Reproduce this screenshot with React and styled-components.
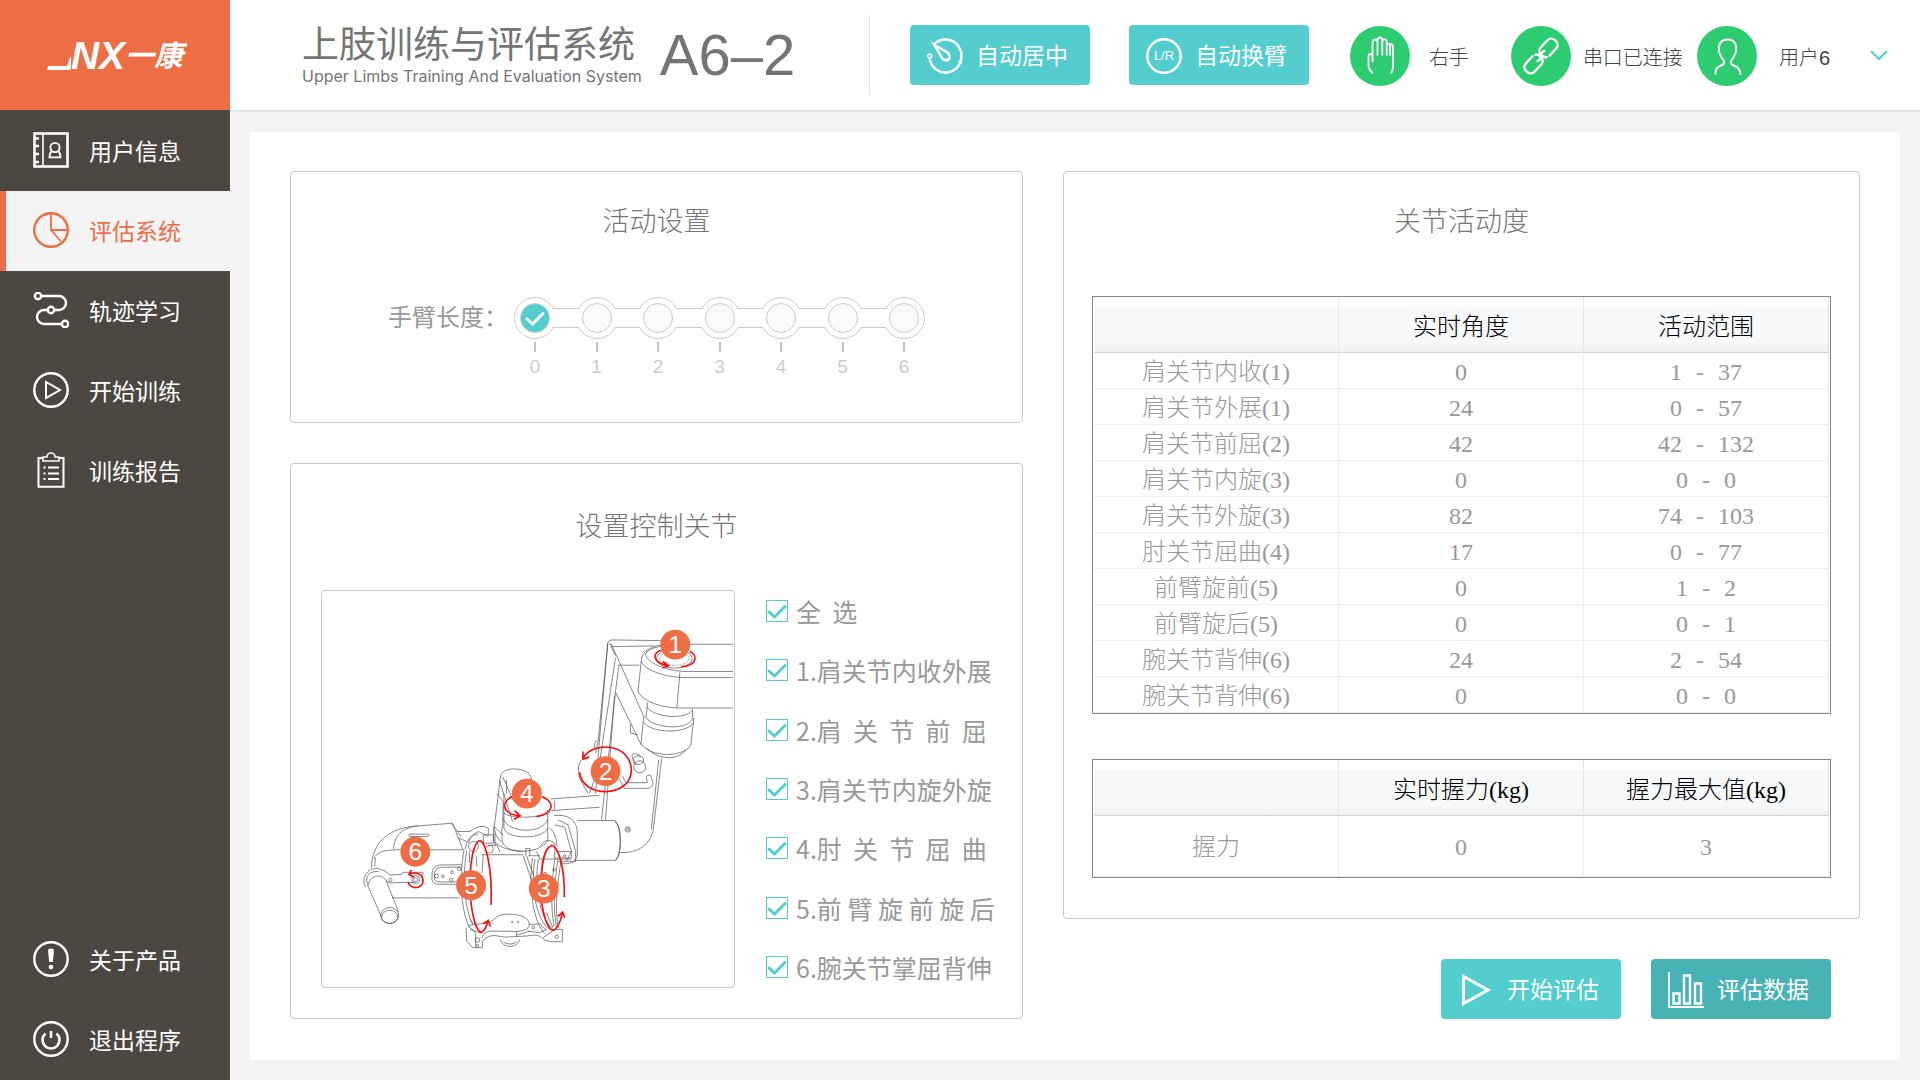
import React, { useState } from "react";
// Styling
import styled, { createGlobalStyle, css } from "styled-components";

const arm = ["0", "1", "2", "3", "4", "5", "6"];

const joints = [
  "全  选",
  "1.肩关节内收外展",
  "2.肩  关  节  前  屈",
  "3.肩关节内旋外旋",
  "4.肘  关  节  屈  曲",
  "5.前 臂 旋 前 旋 后",
  "6.腕关节掌屈背伸",
];

const motion = [
  { name: "肩关节内收(1)", angle: 0, range: [1, 37] },
  { name: "肩关节外展(1)", angle: 24, range: [0, 57] },
  { name: "肩关节前屈(2)", angle: 42, range: [42, 132] },
  { name: "肩关节内旋(3)", angle: 0, range: [0, 0] },
  { name: "肩关节外旋(3)", angle: 82, range: [74, 103] },
  { name: "肘关节屈曲(4)", angle: 17, range: [0, 77] },
  { name: "前臂旋前(5)", angle: 0, range: [1, 2] },
  { name: "前臂旋后(5)", angle: 0, range: [0, 1] },
  { name: "腕关节背伸(6)", angle: 24, range: [2, 54] },
  { name: "腕关节背伸(6)", angle: 0, range: [0, 0] },
];

// Icons
const icons = {
  user: (
    <>
      <rect x="1.5" y="1.5" width="33" height="33" strokeWidth="2.6" />
      <path d="M10 2V34" strokeWidth="1.6" />
      <path d="M2 6.5H6M2 14H6M2 22H6M2 30H6" strokeWidth="2.6" />
      <circle cx="22" cy="15.5" r="4.6" strokeWidth="1.8" />
      <path d="M19 19C17 20.500 16.500 22 16.500 25.300H27.500C27.500 22 27 20.500 25 19" strokeWidth="1.8" />
    </>
  ),
  pie: (
    <>
      <circle cx="18" cy="18" r="16.800" strokeWidth="2.400" />
      <path d="M18 2V18H34M18 18L28 29.500" strokeWidth="1.800" />
    </>
  ),
  route: (
    <>
      <circle cx="5" cy="4" r="3.200" strokeWidth="2.400" />
      <circle cx="18" cy="18" r="3.200" strokeWidth="2.400" />
      <circle cx="32" cy="32" r="3.200" strokeWidth="2.400" />
      <path d="M8 4H26A7 7 0 0 1 26 18H21M15 18H11A7 7 0 0 0 11 32H29" strokeWidth="2.400" />
    </>
  ),
  play: (
    <>
      <circle cx="18" cy="18" r="16.700" strokeWidth="2.400" />
      <path d="M13 10V26L27 18Z" strokeWidth="2" />
    </>
  ),
  report: (
    <>
      <path d="M10 6H5.500V34.800H30.500V6H26" strokeWidth="2" />
      <path d="M10 5V9H26V5H22A4 4 0 0 0 14 5Z" strokeWidth="1.600" />
      <path d="M15 15.500H26M15 21.500H26M15 27H26M10.500 15.500H12.500M10.500 21.500H12.500M10.500 27H12.500" strokeWidth="1.800" />
    </>
  ),
  about: (
    <>
      <circle cx="18" cy="18" r="16.700" strokeWidth="2.400" />
      <path d="M15 9.500A3 2 0 0 1 21 9.500L19.800 21H16.200Z" fill="currentColor" stroke="none" />
      <circle cx="18" cy="26" r="2.300" fill="currentColor" stroke="none" />
    </>
  ),
  exit: (
    <>
      <circle cx="18" cy="18" r="16.700" strokeWidth="2.400" />
      <path d="M12.500 12.500A8.500 8.500 0 1 0 23.500 12.500M18 10V17" strokeWidth="2.600" />
    </>
  ),
  gauge: (
    <>
      <path d="M7 6.500A16 16.500 0 1 1 2.700 21" strokeWidth="2.500" />
      <circle cx="2.700" cy="18" r="2" strokeWidth="1.500" />
      <path d="M7.500 7L20.500 14.500C23 17 23 20 21.500 21.500C20 23 16.500 22.500 15 20Z" strokeWidth="2.500" />
      <path d="M30.500 23L35 26V22Z" fill="currentColor" stroke="none" />
    </>
  ),
  swap: (
    <>
      <circle cx="18" cy="18" r="16.700" strokeWidth="2.400" />
      <text x="18" y="22" textAnchor="middle" fontSize="13" fill="currentColor" stroke="none">
        L/R
      </text>
    </>
  ),
  start: <path d="M5.500 4.500V31.500L30 18Z" strokeWidth="3" />,
  chart: (
    <>
      <path d="M1 0V35H36" strokeWidth="1.800" />
      <path d="M5.500 21.500H11.500V31.500H5.500ZM16 3.500H22V31.500H16ZM27 11.500H33V31.500H27Z" strokeWidth="2.400" />
    </>
  ),
  hand: (
    <path
      d="M23 47.500Q18.500 43 18.500 40V31Q18.500 28 20.500 28Q22.500 28 22.500 31V36V16Q23 13.500 25.300 13.500Q27.500 13.500 27.500 16V29.500V14Q28 11.500 30 11.500Q32.300 11.500 32.300 14V29.500V15.500Q32.300 13.300 34.400 13.300Q36.700 13.300 36.700 15.500V29.500V19Q36.700 18 40 18Q43 18 43 21V41Q43 44 41 47.500M40 19V29.500"
      strokeWidth="1.800"
    />
  ),
  link: (
    <g transform="translate(30 30) rotate(-47)" strokeWidth="2.400" strokeLinecap="round">
      <path d="M6 6H16A5 5 0 0 0 21 1V-1A5 5 0 0 0 16-6H6A5 5 0 0 0 1-1V1Q1 4 3 5M-6 1Q-4 2 1 1" />
      <path d="M-6-6H-16A5 5 0 0 0-21-1V1A5 5 0 0 0-16 6H-6A5 5 0 0 0-1 1V-1Q-1-4-3-5M6-1Q4-2-1-1" />
    </g>
  ),
  person: (
    <path
      d="M18.500 48.500Q18 42 23 40Q28 38.500 27 35C24 31 22.500 29 22 25Q21 13.500 30.500 13.500Q40 13.500 39 25C38.500 29 37 31 34 35Q33 38.500 38 40Q43 42 43.500 48.500"
      strokeWidth="2"
    />
  ),
};

const Icon = ({ name, size = 36 }) => (
  <Glyph width={size} height={size} viewBox={`0 0 ${size} ${size}`} aria-hidden="true">
    {icons[name]}
  </Glyph>
);

const Tick = () => (
  <TickMark viewBox="0 0 22 22" aria-hidden="true">
    <path d="M3 12L8.500 17L19 6.500" />
  </TickMark>
);

const RobotArm = () => (
  <Drawing viewBox="34 31 1241 1192" role="img" aria-label="控制关节">
    <g fill="none" stroke="#4a4a4a" strokeWidth="2">
      {/* post and back plate */}
      <path d="M858 520L866 480L895 186Q898 178 908 178L1055 180M905 198L1035 196M900 186L918 225M905 190L1005 412M918 232L868 560L840 640M926 254H990M928 255L918 335L996 495M918 335L876 720M915 345L888 720M895 186L868 500L858 640" />
      <path d="M1057 535L1033 740C1028 795 985 822 930 818M1048 540L1026 748M862 480Q852 488 856 505M815 540Q800 560 810 595L835 640" />
      <circle cx="955" cy="749" r="8" />
      <circle cx="955" cy="749" r="4" />
      <path d="M963 432V458L985 464M968 530C965 515 995 520 992 532M968 530L980 555" />
      <circle cx="991" cy="560" r="18" />
      <ellipse cx="987" cy="540" rx="16" ry="13" />
      <path d="M925 590L945 625H1015Q1030 622 1031 608L1024 586Q1012 582 1011 592L1014 608H950L938 588" />
      {/* shoulder block */}
      <path d="M1272 191H1140M1055 193C1015 200 995 220 996 240L986 330C990 355 1040 380 1103 383H1272M1272 273H1120C1060 268 1015 245 1008 222Q1012 205 1055 197M1272 291H1112C1045 285 1000 262 996 242M1112 276L1103 383" />
      <ellipse cx="1095" cy="234" rx="54" ry="29" />
      <ellipse cx="1095" cy="234" rx="44" ry="21" strokeDasharray="4 4" />
      <path d="M1015 366L1010 412C1022 430 1060 440 1095 440C1130 438 1150 425 1150 412V386M1013 380C1030 410 1125 420 1148 392M1003 410L995 490C1010 512 1040 522 1075 523C1110 522 1138 510 1145 495L1154 412M1002 425C1025 460 1130 462 1153 428M1012 505Q1040 532 1080 533Q1110 532 1130 510" />
      {/* beam and elbow cylinder */}
      <path d="M722 657L870 646M725 692L870 682M735 662V690M803 722H915C940 735 938 830 918 842H797M915 722Q932 740 932 782T918 842" />
      <path d="M733 707C775 702 803 720 803 760V825C800 850 775 856 750 850M735 735L765 742L785 815L770 845M745 720L775 735L798 815V845H745M720 745Q740 760 742 800" />
      {/* elbow motor */}
      <path d="M572 590C575 562 625 560 655 578Q665 590 666 602M572 588L553 740Q555 775 575 785M568 600L608 725M578 590L612 665M560 640L580 665L578 745M582 640V745C590 780 700 780 714 745V690M580 715C590 760 700 765 714 718M582 700C600 715 700 720 714 690M575 745L577 785C590 830 700 820 714 780V745M550 740L552 785Q575 812 640 815M648 828V806H660V828M553 740L578 765M590 600L590 640" />
      {/* forearm shell */}
      <path d="M183 865C183 785 240 742 325 738L427 730L458 808M190 838C198 815 225 810 270 810H462M192 860L195 835M250 808C250 770 275 742 325 738M245 955H448M425 732L453 770M440 755H480M445 775L470 785" />
      <rect x="296" y="763" width="60" height="7" rx="3" />
      <path d="M455 855L388 856Q368 860 366 878L365 900Q368 914 385 914H450M455 862L392 863Q375 864 373 880V898Q375 907 390 907H448" />
      <circle cx="379" cy="889" r="6" />
      <circle cx="398" cy="890" r="4" />
      <circle cx="426" cy="878" r="4" />
      <circle cx="423" cy="901" r="5" />
      <circle cx="447" cy="868" r="5" />
      {/* handle */}
      <path d="M165 922C150 890 175 862 205 867Q225 872 238 886L275 884L278 878H338V888M172 915C160 890 180 872 205 876M226 905Q240 914 260 909L315 908" />
      <circle cx="240" cy="901" r="5" />
      <circle cx="316" cy="900" r="12" />
      <circle cx="316" cy="900" r="6" />
      <path d="M172 918C180 882 218 882 228 905L265 998M172 918L212 1010" />
      <ellipse cx="238" cy="1008" rx="27" ry="24" />
      <ellipse cx="238" cy="1012" rx="24" ry="20" />
      {/* rings */}
      <path d="M462 810C445 900 455 1000 478 1045M470 812C455 900 465 990 488 1035M478 815V850M520 825L516 880M500 830V860M465 808Q470 770 505 755L535 770M480 755Q510 730 535 745V765M475 790Q480 765 505 762M520 765H550V790H520ZM515 825H640M535 798L560 795L570 815M555 760V800M480 1020Q490 1035 500 1035" />
      <circle cx="538" cy="808" r="12" />
      <circle cx="490" cy="800" r="15" />
      <path d="M640 828L668 910M650 828L672 890M655 828H690M676 838C660 920 680 1015 715 1048M668 835C655 930 672 1030 705 1062M686 838C672 920 690 1010 725 1045M755 838C745 900 733 985 746 1045M735 838C725 910 722 980 733 1040M745 838C735 900 728 980 740 1042M690 800Q710 770 735 790V835H785V815H740M680 815L690 838H785M700 880V900M710 1000L730 1045" />
      <circle cx="733" cy="870" r="4" />
      <circle cx="706" cy="882" r="4" />
      <circle cx="765" cy="829" r="4" />
      {/* wrist support */}
      <path d="M468 1045L470 1085L488 1105H517V1085C545 1058 560 1072 585 1073L650 1070C690 1062 690 1072 705 1082L725 1087H758V1050H735L700 1075M475 1038L535 1030C560 1020 555 1003 600 1004C645 1006 660 1020 658 1040Q650 1055 620 1056L540 1055Q520 1060 515 1075M475 1038L497 1062V1103M480 1050L515 1062M658 1035L690 1033L710 1052M655 1055L690 1060L710 1050M620 1056V1068L658 1055M572 1080C575 1108 625 1108 629 1080M580 1088Q600 1100 620 1088" />
      <circle cx="502" cy="1082" r="7" />
      <circle cx="502" cy="1099" r="4" />
      <circle cx="741" cy="1072" r="5" />
      <circle cx="670" cy="1044" r="4" />
      <circle cx="607" cy="1028" r="2" />
      <circle cx="625" cy="1028" r="2" />
    </g>
    <g fill="none" stroke="#f5100c" strokeWidth="5">
      <path d="M1056 209C1030 216 1026 245 1076 256M1061 243L1078 256L1060 262M1142 213C1166 224 1166 254 1116 259" />
      <path d="M810 577C818 655 962 655 966 572C966 490 850 480 820 535M820 514V537L839 531" />
      <path d="M608 650C572 665 575 702 630 708M614 692L631 708L612 718M697 650C736 665 734 703 680 710" />
      <path d="M293 907C300 931 341 930 338 900C336 880 310 876 297 884M303 871L296 884L311 893" />
      <path d="M543 976C548 860 525 780 508 783C490 790 480 850 481 890M482 962C487 1010 500 1062 516 1058Q528 1050 534 1024M519 1033L535 1023L541 1041" />
      <path d="M764 953C766 850 740 790 724 798C705 805 697 850 695 885M696 970C705 1030 720 1055 733 1052Q750 1040 758 1000M744 1011L759 998L765 1015" />
    </g>
    {[
      [1, 1098, 192],
      [2, 888, 573],
      [3, 702, 927],
      [4, 651, 641],
      [5, 483, 917],
      [6, 315, 816],
    ].map(([n, x, y]) => (
      <g key={n}>
        <circle cx={x} cy={y} r="45" fill="#ee6d44" />
        <text x={x} y={y + 26} textAnchor="middle" fontSize="74" fill="#fff">
          {n}
        </text>
      </g>
    ))}
  </Drawing>
);

function App() {
  const [length, setLength] = useState("0");
  const [checked, setChecked] = useState(joints.map(() => true));

  const onJointClicked = (index) => () => {
    if (index === 0) {
      setChecked(joints.map(() => !checked[0]));
      return;
    }
    const next = checked.map((value, i) => (i === index ? !value : value));
    next[0] = next.slice(1).every(Boolean);
    setChecked(next);
  };

  return (
    <Page>
      <GlobalStyle />
      <Sidebar>
        <Logo href="#home">
          <svg width="24" height="28" viewBox="0 0 24 28" aria-hidden="true">
            <path d="M1 24H20L19 28H0ZM20 24L23 15H27L23 28H18Z" fill="currentColor" />
          </svg>
          <LogoLatin>NX</LogoLatin>
          <LogoName>一康</LogoName>
        </Logo>
        <Nav>
          <NavItem href="#user">
            <Icon name="user" />
            用户信息
          </NavItem>
          <NavItem href="#evaluation" $active>
            <Icon name="pie" />
            评估系统
          </NavItem>
          <NavItem href="#track">
            <Icon name="route" />
            轨迹学习
          </NavItem>
          <NavItem href="#training">
            <Icon name="play" />
            开始训练
          </NavItem>
          <NavItem href="#report">
            <Icon name="report" />
            训练报告
          </NavItem>
          <NavSpace />
          <NavItem href="#about">
            <Icon name="about" />
            关于产品
          </NavItem>
          <NavItem href="#exit">
            <Icon name="exit" />
            退出程序
          </NavItem>
        </Nav>
      </Sidebar>

      <Content>
        <Header>
          <Brand>
            <div>
              <Title>上肢训练与评估系统</Title>
              <Subtitle>Upper Limbs Training And Evaluation System</Subtitle>
            </div>
            <Model>A6–2</Model>
          </Brand>
          <Tools>
            <Button>
              <Icon name="gauge" />
              自动居中
            </Button>
            <Button>
              <Icon name="swap" />
              自动换臂
            </Button>
          </Tools>
          <StatusBar>
            <Status $gap="19px">
              <Round>
                <Icon name="hand" size={60} />
              </Round>
              右手
            </Status>
            <Status $gap="12px">
              <Round>
                <Icon name="link" size={60} />
              </Round>
              串口已连接
            </Status>
            <Status $gap="22px">
              <Round>
                <Icon name="person" size={60} />
              </Round>
              <span>
                用户<b>6</b>
              </span>
            </Status>
          </StatusBar>
          <MenuButton aria-label="用户菜单">
            <svg width="18" height="11" viewBox="0 0 18 11" aria-hidden="true">
              <path d="M1 1L9 9L17 1" fill="none" stroke="currentColor" strokeWidth="2" />
            </svg>
          </MenuButton>
        </Header>

        <Panel>
          <Column>
            <Card>
              <CardTitle>活动设置</CardTitle>
              <ArmLength>
                <ArmLabel id="arm-length">手臂长度：</ArmLabel>
                <Track role="radiogroup" aria-labelledby="arm-length">
                  {arm.map((value, i) => (
                    <React.Fragment key={value}>
                      {i > 0 && <TrackLink />}
                      <Step>
                        <Ring>
                          <Knob
                            type="radio"
                            name="arm"
                            value={value}
                            checked={length === value}
                            onChange={() => setLength(value)}
                          />
                          {length === value && <Tick />}
                        </Ring>
                        <StepMark />
                        {value}
                      </Step>
                    </React.Fragment>
                  ))}
                </Track>
              </ArmLength>
            </Card>

            <Card $joint>
              <CardTitle>设置控制关节</CardTitle>
              <JointLayout>
                <RobotArm />
                <JointList>
                  {joints.map((name, i) => (
                    <Joint key={name}>
                      <Box>
                        <Check type="checkbox" checked={checked[i]} onChange={onJointClicked(i)} />
                        {checked[i] && <Tick />}
                      </Box>
                      {name}
                    </Joint>
                  ))}
                </JointList>
              </JointLayout>
            </Card>
          </Column>

          <Column>
            <Card $wide>
              <CardTitle>关节活动度</CardTitle>
              <Tables>
                <Table $row="36px">
                  <thead>
                    <tr>
                      <th />
                      <th>实时角度</th>
                      <th>活动范围</th>
                    </tr>
                  </thead>
                  <tbody>
                    {motion.map(({ name, angle, range }, i) => (
                      <tr key={i}>
                        <td>{name}</td>
                        <td>{angle}</td>
                        <td>
                          <Range>
                            <span>{range[0]}</span>
                            <span>-</span>
                            <span>{range[1]}</span>
                          </Range>
                        </td>
                      </tr>
                    ))}
                  </tbody>
                </Table>
                <Table $row="61px">
                  <thead>
                    <tr>
                      <th />
                      <th>实时握力(kg)</th>
                      <th>握力最大值(kg)</th>
                    </tr>
                  </thead>
                  <tbody>
                    <tr>
                      <td>握力</td>
                      <td>0</td>
                      <td>3</td>
                    </tr>
                  </tbody>
                </Table>
              </Tables>
            </Card>
            <Actions>
              <Button>
                <Icon name="start" />
                开始评估
              </Button>
              <Button $dark>
                <Icon name="chart" />
                评估数据
              </Button>
            </Actions>
          </Column>
        </Panel>
      </Content>
    </Page>
  );
}

const GlobalStyle = createGlobalStyle`
  * {
    box-sizing: border-box;
  }
  body {
    margin: 0;
    background: #f4f4f4;
    font-family: "Liberation Sans", "Noto Sans CJK SC", sans-serif;
  }
  button {
    font-family: inherit;
    cursor: pointer;
  }
`;

const Page = styled.div`
  display: flex;
  min-height: 100vh;
`;

const Glyph = styled.svg`
  flex: none;
  fill: none;
  stroke: currentColor;
`;

const Sidebar = styled.aside`
  display: flex;
  flex-direction: column;
  flex: none;
  width: 230px;
  background: #4d4742;
`;

const Logo = styled.a`
  display: flex;
  align-items: center;
  justify-content: center;
  height: 110px;
  padding-top: 2px;
  background: #ee6d44;
  color: #fff;
  font-weight: 700;
  font-style: italic;
  line-height: 40px;
  text-decoration: none;
`;

const LogoLatin = styled.span`
  font-size: 39px;
`;

const LogoName = styled.span`
  font-size: 29px;
`;

const Nav = styled.nav`
  display: flex;
  flex-direction: column;
  flex: 1;
  padding-top: 1px;
`;

const NavItem = styled.a`
  display: flex;
  align-items: center;
  gap: 20px;
  height: 80px;
  padding: 0 0 2px 33px;
  color: #fff;
  font-size: 23px;
  text-decoration: none;
  ${({ $active }) =>
    $active &&
    css`
      padding-left: 27px;
      border-left: 6px solid #ee6d44;
      background: #f4f4f4;
      color: #ee6d44;
    `}
`;

const NavSpace = styled.div`
  flex: 1;
`;

const Content = styled.div`
  display: flex;
  flex-direction: column;
  flex: 1;
  min-width: 0;
`;

const Header = styled.header`
  display: flex;
  align-items: center;
  height: 112px;
  padding: 0 32px 0 72px;
  border-bottom: 2px solid #e3e3e3;
  background: #fff;
`;

const Brand = styled.div`
  display: flex;
  align-items: center;
  flex: 1;
  gap: 18px;
  color: #757575;
`;

const Title = styled.h1`
  margin: 0;
  font-size: 37px;
  font-weight: 400;
  line-height: 42px;
  white-space: nowrap;
`;

const Subtitle = styled.div`
  font-family: Inter, "Liberation Sans", sans-serif;
  font-size: 16px;
  line-height: 18px;
  white-space: nowrap;
`;

const Model = styled.div`
  font-size: 58px;
  line-height: 60px;
  white-space: nowrap;
`;

const Tools = styled.div`
  display: flex;
  align-items: center;
  gap: 39px;
  height: 80px;
  padding-left: 40px;
  border-left: 1px solid #e3e3e3;
`;

const Button = styled.button`
  display: flex;
  align-items: center;
  gap: 13px;
  width: 180px;
  height: 60px;
  padding: 0 0 2px 17px;
  border: 0;
  border-radius: 4px;
  background: ${({ $dark }) => ($dark ? "#47b3b4" : "#53cdcd")};
  color: #fff;
  font-size: 23px;
  white-space: nowrap;
  ${Glyph} {
    margin-top: 4px;
  }
`;

const StatusBar = styled.div`
  display: grid;
  grid-template-columns: 161px 186px auto;
  margin-left: 41px;
  padding-top: 2px;
`;

const Status = styled.div`
  display: flex;
  align-items: center;
  gap: ${({ $gap }) => $gap};
  color: #444;
  font-size: 20px;
  font-weight: 300;
  white-space: nowrap;
`;

const Round = styled.div`
  display: flex;
  border-radius: 50%;
  background: #2ecc71;
  color: #fff;
`;

const MenuButton = styled.button`
  display: flex;
  margin-left: 40px;
  padding: 0;
  border: 0;
  background: none;
  color: #53cdcd;
`;

const Panel = styled.main`
  display: grid;
  grid-template-columns: minmax(0, 733fr) minmax(0, 797fr);
  gap: 40px;
  flex: 1;
  margin: 20px;
  padding: 39px 40px 41px;
  background: #fff;
`;

const Column = styled.div`
  display: flex;
  flex-direction: column;
  gap: 40px;
`;

const Card = styled.section`
  flex: ${({ $joint, $wide }) => ($joint || $wide ? 1 : "none")};
  padding: ${({ $joint, $wide }) => ($joint ? "42px 30px 30px" : $wide ? "29px 28px 40px" : "29px 30px 43px")};
  border: 1px solid #c8c8c8;
  border-radius: 4px;
`;

const CardTitle = styled.h2`
  margin: 0;
  color: #777;
  font-size: 27px;
  font-weight: 300;
  line-height: 42px;
  text-align: center;
`;

const ArmLength = styled.div`
  display: flex;
  justify-content: center;
  gap: 6px;
  margin-top: 54px;
`;

const ArmLabel = styled.div`
  color: #999;
  font-size: 24px;
  line-height: 42px;
  white-space: nowrap;
`;

const Track = styled.div`
  display: flex;
  width: 411px;
`;

const Step = styled.label`
  display: flex;
  flex-direction: column;
  align-items: center;
  gap: 3px;
  color: #ccc;
  font-size: 19px;
  line-height: 24px;
  cursor: pointer;
`;

const Ring = styled.span`
  position: relative;
  display: grid;
  place-items: center;
  width: 42px;
  height: 42px;
  border: 1px solid #ccc;
  border-radius: 50%;
`;

// Opens the rings towards each other
const TrackLink = styled.span`
  position: relative;
  z-index: 1;
  flex: 1;
  height: 20px;
  margin: 11px -3px 0;
  border: solid #ccc;
  border-width: 1px 0;
  background: #fff;
`;

const Knob = styled.input`
  appearance: none;
  width: 30px;
  height: 30px;
  margin: 0;
  border: 1px solid #ccc;
  border-radius: 50%;
  background: #fafafa;
  cursor: pointer;
  &:checked {
    background: #53cdcd;
  }
  &:checked + svg {
    color: #fff;
  }
`;

const StepMark = styled.span`
  width: 2px;
  height: 10px;
  background: #c4c4c4;
`;

const TickMark = styled.svg`
  position: absolute;
  inset: 0;
  width: 22px;
  height: 22px;
  margin: auto;
  fill: none;
  stroke: currentColor;
  stroke-width: 3;
  stroke-linecap: round;
  pointer-events: none;
`;

const JointLayout = styled.div`
  display: grid;
  grid-template-columns: 414px 1fr;
  gap: 31px;
  margin-top: 42px;
`;

const Drawing = styled.svg`
  width: 100%;
  height: 398px;
  border: 1px solid #c8c8c8;
  border-radius: 4px;
`;

const JointList = styled.div`
  display: flex;
  flex-direction: column;
  justify-content: space-between;
`;

const Joint = styled.label`
  display: flex;
  align-items: center;
  gap: 8px;
  height: 42px;
  color: #999;
  font-family: "Noto Sans CJK SC", sans-serif;
  font-size: 25px;
  line-height: 42px;
  white-space: pre;
  cursor: pointer;
`;

const Box = styled.span`
  position: relative;
  display: flex;
  color: #53cdcd;
`;

const Check = styled.input`
  appearance: none;
  width: 22px;
  height: 22px;
  margin: 0;
  border: 1px solid #53cdcd;
  cursor: pointer;
`;

const Tables = styled.div`
  display: flex;
  flex-direction: column;
  gap: 45px;
  margin-top: 53px;
`;

const Table = styled.table`
  width: 100%;
  padding: 0 1px;
  border: 1px solid #828790;
  border-spacing: 0;
  table-layout: fixed;
  color: #999;
  font-family: "Liberation Serif", "Noto Sans CJK SC", serif;
  font-size: 24px;
  line-height: 30px;
  text-align: center;
  th {
    height: 56px;
    padding: 4px 0 0;
    border-right: 1px solid #e4e5e6;
    border-bottom: 1px solid #d5d5d5;
    background: linear-gradient(#fff 10px, #f7f8fa 10px, #f7f8fa 44px, #f0f1f2);
    color: #000;
    font-weight: 300;
  }
  td {
    height: ${({ $row }) => $row};
    padding: 2px 0 0;
    border-right: 1px solid #eee;
    border-bottom: 1px solid #eee;
    font-weight: 300;
  }
`;

const Range = styled.span`
  display: inline-flex;
  gap: 14px;
`;

const Actions = styled.div`
  display: flex;
  justify-content: flex-end;
  gap: 30px;
  padding-right: 29px;
`;

export default App;
